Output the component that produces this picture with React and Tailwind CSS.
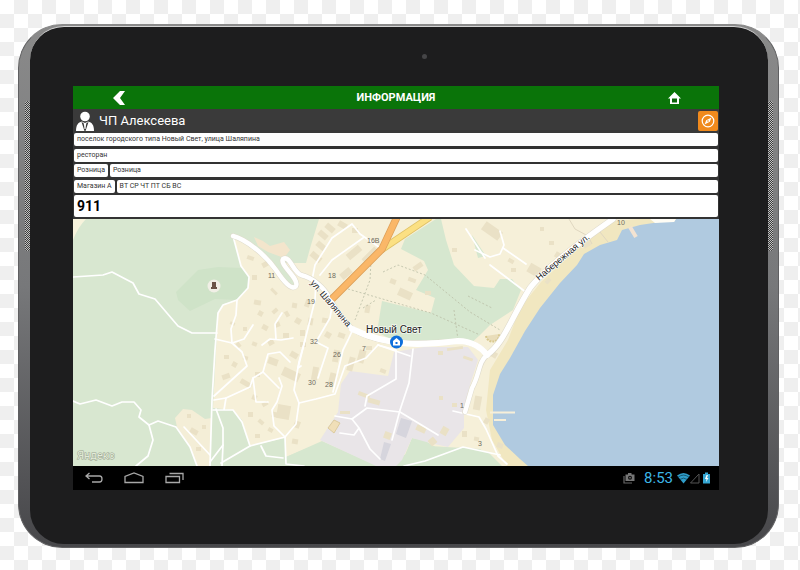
import React from 'react';

const buildings = [
  [247, 256, 7, 4, 20], [262, 262, 6, 5, -30], [252, 275, 5, 5, 0], [270, 290, 8, 3, 45], [254, 300, 7, 5, 10],
  [258, 311, 5, 5, 30], [272, 309, 6, 4, -40], [230, 322, 5, 3, 20], [243, 327, 4, 4, 0], [262, 325, 6, 5, 30],
  [275, 322, 5, 5, -20], [284, 312, 6, 4, 60], [292, 303, 5, 5, 10], [295, 318, 6, 6, 30], [283, 333, 6, 5, 0],
  [268, 340, 6, 5, -30], [252, 342, 5, 4, 20], [236, 343, 5, 4, 50], [224, 355, 5, 4, 0], [232, 362, 5, 5, 30],
  [222, 374, 8, 5, -20], [243, 356, 5, 4, 15], [240, 381, 12, 5, 30], [255, 372, 5, 5, 0], [268, 358, 10, 7, 20],
  [282, 370, 18, 9, 25], [290, 352, 8, 6, 30], [300, 342, 6, 5, 0], [252, 395, 5, 5, 20], [262, 402, 6, 4, -30],
  [248, 412, 5, 5, 0], [258, 420, 6, 4, 40], [272, 412, 5, 5, 10], [255, 434, 5, 4, 0], [268, 428, 5, 4, 30],
  [277, 405, 13, 14, 10], [294, 421, 6, 7, 20], [292, 439, 6, 5, 10], [318, 232, 10, 6, 40], [316, 243, 10, 6, 40],
  [325, 225, 10, 6, 40], [338, 222, 9, 6, 30], [310, 254, 12, 6, 40], [346, 249, 16, 7, -40], [340, 270, 12, 7, -40],
  [361, 252, 18, 6, -45], [352, 228, 6, 5, 0], [365, 305, 5, 8, 10], [390, 279, 6, 5, 20], [398, 290, 14, 8, 25],
  [413, 264, 10, 5, -35], [408, 278, 8, 4, 20], [425, 291, 6, 4, 0], [482, 226, 20, 10, 35], [452, 248, 5, 4, 0],
  [508, 259, 6, 4, 30], [511, 268, 5, 4, 0], [528, 265, 12, 10, 30], [549, 241, 5, 4, 0], [555, 252, 5, 6, 30],
  [540, 227, 4, 4, 0], [583, 243, 8, 4, -30], [545, 279, 6, 4, -50], [333, 350, 6, 12, 10], [348, 357, 6, 14, 15],
  [312, 367, 6, 13, 10], [329, 373, 7, 12, 15], [358, 350, 7, 13, 15], [366, 346, 6, 4, 0], [380, 369, 6, 4, 20],
  [358, 393, 12, 4, 20], [368, 399, 12, 5, 15], [340, 411, 10, 3, 0], [384, 432, 7, 7, 20], [416, 426, 10, 6, 25],
  [429, 438, 7, 7, -40], [441, 427, 7, 8, 30], [474, 396, 7, 14, 10], [484, 418, 5, 6, 30], [497, 443, 6, 5, 20],
  [474, 437, 5, 4, 10], [462, 431, 5, 6, 0], [438, 351, 5, 4, 0], [447, 347, 16, 3, -8], [463, 357, 10, 3, 20],
  [439, 396, 4, 4, 0], [452, 403, 5, 4, 0], [492, 352, 5, 6, 30], [190, 429, 8, 5, 30], [202, 425, 4, 4, 0],
  [196, 447, 5, 4, 0], [187, 414, 4, 4, 0], [305, 300, 5, 7, 20], [308, 318, 5, 7, 10], [322, 318, 6, 5, 10],
  [325, 332, 6, 6, 30], [300, 330, 5, 6, 0], [338, 333, 7, 5, 20],
];

const minorRoads = [
  'M73 277 L103 275 L112 272 L133 283 L139 294 L155 299 L178 326 L192 333 L217 333',
  'M233 236 L241 266 L249 277 L248 288 L237 300 L223 305 L218 313 L215 350 L212 400 L210 466',
  'M237 300 L236 315 L231 329 L232 343 L215 339',
  'M232 343 L244 339 L253 325',
  'M232 343 L242 352 L247 366 L214 396',
  'M73 401 L80 404 L96 400 L112 406 L122 402 L134 402 L141 410 L139 417 L149 425 L153 440 L148 456 L136 466',
  'M149 425 L158 421 L176 427 L190 447 L197 466',
  'M184 427 L210 455',
  'M216 409 L223 428 L223 445 L210 462',
  'M223 445 L222 466 M221 463 L250 446 L285 437',
  'M214 400 L226 398 L224 410 M213 410 L233 410 L242 422 L250 446',
  'M226 398 L250 387 L253 378 L263 372 L268 354 L280 352 L290 362',
  'M263 372 L279 388 M253 378 L256 402 L268 402 M279 378 L282 386 L277 402 L272 410 L274 426 L285 437 L286 464 L304 466',
  'M261 446 L266 456 L283 458',
  'M262 345 L270 339 L281 340 L293 338 M276 339 L275 324 L282 313',
  'M316 281 L315 300 L305 340 L298 368 L301 366',
  'M333 300 L330 318 L316 342 L328 348 L318 378',
  'M299 403 L294 390 L299 362 L305 340',
  'M299 403 L316 399 L335 394 L345 366 L366 358 L378 345',
  'M299 403 L296 424 L285 437',
  'M320 275 L332 260 L363 238 M312 280 L315 265 L332 238 L352 224 L360 234 L379 247',
  'M354 327 L348 340 L343 350 L333 392',
  'M378 345 L396 350 L396 379 L367 396 L365 406',
  'M413 349 L409 383 L400 410 L392 440',
  'M335 416 L352 419 L367 408 L400 412 L438 435',
  'M352 419 L359 428 L354 435 L340 433 M359 428 L370 449 L380 459',
  'M378 345 L410 356',
  'M404 466 L425 461 L463 447 L500 455',
  'M453 411 L479 417 L486 429 L498 456 L507 464',
  'M475 250 L490 257 L500 254 L504 245 L500 231',
  'M466 229 L485 258 M490 265 L527 293 M503 248 L526 264',
];

const labels = [
  ['11', 268, 278], ['18', 328, 278], ['16В', 367, 243], ['19', 307, 304], ['32', 310, 344], ['26', 333, 357],
  ['7', 362, 351], ['30', 308, 385], ['28', 325, 387], ['1', 460, 408], ['3', 478, 446], ['10', 617, 225],
];

const mainRoad =
  'M233 236 C245 239 265 254 276 270 C284 282 292 291 296 286 C300 279 279 265 283 259 C290 255 293 272 301 275 C313 278 324 287 330 299 C343 322 350 331 370 337 C392 345 425 344 458 341 C472 341 482 348 487 355';
const coastRoad = 'M487 355 C504 343 510 320 530 288 C544 270 570 249 613 219';
const southRoad = 'M487 355 C478 362 480 374 472 388 L465 412';

function TownMap() {
  return (
    <svg
      className="block w-full aspect-[646/247]"
      viewBox="73 219 646 247"
      preserveAspectRatio="xMidYMid slice"
      role="img"
      aria-label="Новый Свет"
    >
      <rect x="73" y="219" width="646" height="247" fill="#d8e7d0" />
      <path d="M73 219 H86 Q78 227 73 240Z" fill="#f7f3dc" />
      <path d="M178 300 L176 292 L198 270 L218 267 L243 268 L250 279 L247 290 L237 300 L215 299 L190 311Z" fill="#cfe3c8" />
      {/* built-up land */}
      <path
        d="M233 236 L246 242 L272 265 L292 289 L299 283 L284 263 L306 263 L311 245 L319 219 H719 V466 H500 L480 449 L430 446 L372 466 L322 442 L286 457 L285 438 L250 446 L242 420 L233 410 L213 408 L218 312 L224 304 L237 300 L248 288 L249 277 L241 266Z"
        fill="#f6f0d9"
      />
      <path d="M183 409 L192 410 L205 419 L212 418 L210 466 H197 L190 447 L177 427 L175 418Z" fill="#f4eed7" />
      <path d="M254 237 L263 241 L270 246 L284 242 L290 250 L284 258 L268 252 L258 246Z" fill="#f3e5cc" />
      {/* parks */}
      <path
        d="M405 239 L436 219 H441 L446 240 L454 265 L474 286 L494 288 L500 279 L512 279 L521 290 L513 310 L490 325 L480 335 L469 345 L455 340 L396 342 L377 332 L382 301 L431 313 L435 298 L416 290 L428 270 L424 261 L401 249Z"
        fill="#d6e7cf"
      />
      <path d="M472 235 L486 256 L478 258Z" fill="#d6e7cf" />
      <path d="M412 438 L424 440 L440 450 L464 447 L488 452 L502 466 H398 L405 455Z" fill="#d6e7cf" />
      <path d="M322 441 L286 457 L288 466 H378Z" fill="#d6e7cf" />
      {/* industrial area */}
      <path
        d="M350 371 L388 376 L394 352 L424 347 L468 347 L478 360 L470 385 L464 408 L464 428 L448 447 L430 443 L412 438 L402 460 L396 466 H376 L320 440 L338 412 L341 384Z"
        fill="#e9e5e8"
      />
      {/* beach and sea */}
      <path
        d="M614 221 L640 219 H680 L600 260 L530 350 L497 400 L500 430 L530 466 H507 L492 440 L486 410 L490 370 L508 340 L520 308 L541 282 L580 246Z"
        fill="#f1e7c0"
      />
      <path
        d="M676 219 L674 222 L660 222 L640 225 L622 230 L617 240 L600 245 L584 254 L577 265 L560 283 L540 308 L525 331 L510 358 L500 374 L493 395 L493 425 L505 445 L520 459 L528 466 H719 V219Z"
        fill="#b0cae0"
      />
      <path d="M676 219 L674 222 L655 223 L650 219Z" fill="#fffdf5" />
      <path d="M630 227 L636 237" stroke="#f3e3d2" strokeWidth="4" />
      <path d="M490 412.500 H515 M494 420 H506" stroke="#f7efd9" strokeWidth="2" />
      {/* houses */}
      <g fill="#eae1c6">
        {buildings.map(([x, y, w, h, r]) => (
          <rect key={`${x}-${y}`} x={x} y={y} width={w} height={h} transform={`rotate(${r} ${x + w / 2} ${y + h / 2})`} />
        ))}
      </g>
      <path d="M401 418 L412 421 L406 438 L396 434Z M384 442 L391 444 L385 461 L380 459Z" fill="#d6d5dd" />
      <path d="M334 420 L340 423 L334 433 L328 428Z" fill="#f0dfb8" stroke="#dccb9e" />
      <path d="M486 336 A6 6 0 1 0 499 334" fill="#e9ddb9" stroke="#d8c88e" strokeWidth="2" strokeDasharray="2 1" />
      {/* footpaths */}
      <path
        d="M348 289 L431 313 L480 335 M371 261 L370 280 L355 320 M383 272 L398 265 L425 275 L470 312 L500 330 M363 308 L376 300 M468 296 L492 308 M454 310 L458 340"
        fill="none"
        stroke="#b9bca4"
        strokeWidth="0.800"
        strokeDasharray="2 2"
      />
      <g fill="none" stroke="#fff" strokeWidth="1.700" strokeLinejoin="round" strokeLinecap="round">
        {minorRoads.map((d) => (
          <path key={d} d={d} />
        ))}
      </g>
      <path d="M569 219 L575 229 L588 236 L592 244 M600 232 L608 242" fill="none" stroke="#e0d7c0" />
      {/* main roads */}
      <g fill="none" strokeLinecap="round" strokeLinejoin="round">
        <g stroke="#dedacb">
          <path d={mainRoad} strokeWidth="5.500" />
          <path d={coastRoad} strokeWidth="6.500" />
          <path d={southRoad} strokeWidth="5.500" />
        </g>
        <g stroke="#fff">
          <path d={mainRoad} strokeWidth="4.500" />
          <path d="M352 329 C392 348 425 345 458 341 C472 341 482 348 487 355" strokeWidth="6" />
          <path d={coastRoad} strokeWidth="5.500" />
          <path d={southRoad} strokeWidth="4.500" />
        </g>
      </g>
      <g fill="none" strokeLinejoin="round">
        <path d="M430 217 L381 250" stroke="#dfc164" strokeWidth="7" />
        <path d="M430 217 L381 250" stroke="#fbe083" strokeWidth="5.500" />
        <path d="M397 217 L382 249 L332 299" stroke="#dd9f58" strokeWidth="7.500" />
        <path d="M397 217 L382 249 L332 299" stroke="#fab768" strokeWidth="6" />
      </g>
      {/* monument */}
      <circle cx="214" cy="286" r="6.500" fill="#f1efe6" />
      <path d="M212 282 H216 V287 H217 V289 H211 V287 H212Z" fill="#6b5347" />
      {/* labels */}
      <g className="font-['Liberation_Sans',sans-serif] text-[7px]" fill="#6f6b5e">
        {labels.map(([t, x, y]) => (
          <text key={t} x={x} y={y}>
            {t}
          </text>
        ))}
      </g>
      <g
        className="font-['Liberation_Sans',sans-serif] text-[9px]"
        fill="#222"
        stroke="#fff"
        strokeOpacity="0.700"
        strokeWidth="1.500"
        paintOrder="stroke"
      >
        <text transform="translate(310 283) rotate(50)">ул. Шаляпина</text>
        <text transform="translate(539 281) rotate(-40)">Набережная ул.</text>
        <text x="366" y="333" className="text-[10px]">
          Новый Свет
        </text>
      </g>
      <circle cx="396.500" cy="342" r="6.500" fill="#0f6fdc" />
      <path d="M396.500 338 L400 341 V345.500 H393 V341Z" fill="#fff" />
      <rect x="395.500" y="342" width="2" height="2" fill="#0f6fdc" />
      <text
        x="77"
        y="459"
        className="font-[Roboto,sans-serif] text-[11px]"
        fill="#e3ebda"
        stroke="#98a48e"
        strokeWidth="1"
        paintOrder="stroke"
      >
        Яндекс
      </text>
    </svg>
  );
}

function Field({ className = '', children }) {
  return <div className={`flex items-center rounded-xs bg-white px-[3px] ${className}`}>{children}</div>;
}

function Grille() {
  return (
    <div className="mt-[76px] h-[150px] w-[5px] rounded-full bg-[conic-gradient(#c4c4c4_25%,#3a3a3a_0_50%,#c4c4c4_0_75%,#3a3a3a_0)] bg-[length:2px_2px]" />
  );
}

export default function App() {
  return (
    <main className="min-h-screen bg-white bg-[conic-gradient(#efefef_25%,#fff_0_50%,#efefef_0_75%,#fff_0)] bg-[length:28px_28px] pt-[24px] pr-[21px] pb-[22px] pl-[18px] font-[Roboto,sans-serif]">
      <div className="flex rounded-[44px] border border-[#606062] bg-linear-to-b from-[#8a8a8a] via-[#77787a] to-[#47474a] border-t-[#8a8a8a]">
        <div className="flex w-[11px] shrink-0 justify-end">
          <Grille />
        </div>
        <div className="mt-px mb-[3px] min-w-0 grow border-t border-[#d5d5d5] rounded-[34px] bg-[#1d1d1e] pr-[49px] pb-[54px] pl-[43px]">
          <div className="flex h-[59px] items-center justify-center pl-[56px]">
            <span className="size-[5px] rounded-full bg-[#454547]" />
          </div>
          <div className="bg-[#333]">
            <header className="grid h-[23px] grid-cols-[1fr_auto_1fr] items-center bg-[#0a7409] text-white">
              <button type="button" aria-label="Назад" className="ml-[39px] justify-self-start">
                <svg className="block" width="14" height="16" viewBox="0 0 14 16">
                  <path d="M13 1 H8 L1 8 L8 15 H13 L8 8Z" fill="#fff" />
                </svg>
              </button>
              <h1 className="text-[11px] leading-[16px] font-bold">ИНФОРМАЦИЯ</h1>
              <button type="button" aria-label="Домой" className="mr-[37px] justify-self-end">
                <svg className="block" width="15" height="14" viewBox="0 0 15 14">
                  <path d="M7.500 1 L14 7.500 H12 V13 H3 V7.500 H1Z" fill="#fff" />
                  <path d="M5 7.500 H10 V11.500 H5Z" fill="#0a6409" />
                </svg>
              </button>
            </header>
            <div className="flex h-[24px] items-center bg-[#3a3a3a] pr-px pl-[3px] text-white">
              <svg className="shrink-0" width="18" height="20" viewBox="0 0 18 20">
                <circle cx="9" cy="5.500" r="4.800" fill="#fff" />
                <path d="M0 20 C0 14 2 11.500 6 10.500 L9 12 L12 10.500 C16 11.500 18 14 18 20Z" fill="#fff" />
                <path d="M5.500 11 L8.500 20 H9.500 L12.500 11 L10.500 12 L10 14 L9.500 18 H8.500 L8 14 L7.500 12Z" fill="#3a3a3a" />
              </svg>
              <h2 className="ml-[5px] grow text-[13px] leading-[20px]">ЧП Алексеева</h2>
              <button
                type="button"
                aria-label="Маршрут"
                className="flex size-[20px] items-center justify-center rounded-xs bg-[#f08a1d]"
              >
                <svg width="14" height="14" viewBox="0 0 14 14">
                  <circle cx="7" cy="7" r="5.800" fill="none" stroke="#fff" strokeWidth="1.200" />
                  <path d="M10.500 3.500 L8.800 7.800 L3.500 10.500 L5.200 6.200Z" fill="#fff" />
                  <circle cx="7" cy="7" r="0.800" fill="#f08a1d" />
                </svg>
              </button>
            </div>
            <div className="flex h-[86px] flex-col justify-between px-px pb-[2px] text-[7px] leading-[13px] text-[#333]">
              <Field>поселок городского типа Новый Свет, улица Шаляпина</Field>
              <Field>ресторан</Field>
              <div className="flex gap-[2px]">
                <Field>Розница</Field>
                <Field className="grow">Розница</Field>
              </div>
              <div className="flex gap-[2px]">
                <Field>Магазин А</Field>
                <Field className="grow">ВТ СР ЧТ ПТ СБ ВС</Field>
              </div>
              <Field className="text-[14px] leading-[22px] font-bold text-black">911</Field>
            </div>
            <TownMap />
            <nav className="flex h-[24px] items-center bg-black pr-[8px] pl-[12px]">
              <button type="button" aria-label="Назад">
                <svg className="block" width="18" height="12" viewBox="0 0 18 12" fill="none" stroke="#a8a8a8" strokeWidth="1.300">
                  <path d="M4.500 1 L1 4 L4.500 7 M1 4 H14.500 Q17 4 17 7 Q17 10 14.500 10 H7" />
                </svg>
              </button>
              <button type="button" aria-label="Главный экран" className="ml-[21px]">
                <svg className="block" width="20" height="12" viewBox="0 0 20 12" fill="none" stroke="#a8a8a8" strokeWidth="1.300">
                  <path d="M1 10.500 V4.500 L10 1 L19 4.500 V10.500Z" />
                </svg>
              </button>
              <button type="button" aria-label="Недавние" className="ml-[21px]">
                <svg className="block" width="19" height="12" viewBox="0 0 19 12" fill="none" stroke="#a8a8a8" strokeWidth="1.300">
                  <path d="M1 4.500 H14.500 V10.500 H1Z M4.500 1.500 H18 V8" />
                </svg>
              </button>
              <svg className="ml-auto" width="12" height="12" viewBox="0 0 12 12">
                <path d="M1 4 V11 H9" fill="none" stroke="#666" strokeWidth="1.200" />
                <path d="M2.500 2.500 H5 V1 H8.500 V2.500 H11.500 V9 H2.500Z" fill="#777" />
                <circle cx="7" cy="5.800" r="2" fill="#111" />
                <circle cx="7" cy="5.800" r="0.800" fill="#888" />
              </svg>
              <time className="ml-[9px] text-[15px] leading-[20px] text-[#3db6e6]">8:53</time>
              <svg className="ml-[3px]" width="35" height="14" viewBox="0 0 35 14">
                <path d="M1 4.500 Q7.500 -0.500 14 4.500 L7.500 12.500Z" fill="#2f9dc9" />
                <path d="M2 6.200 Q7.500 2 13 6.200 M4 8.400 Q7.500 5.800 11 8.400" fill="none" stroke="#0b3c50" strokeWidth="0.700" />
                <path d="M23 3 V12 H14.500Z" fill="none" stroke="#555" />
                <path d="M27 3 H29 V1.500 H32 V3 H34 V12.500 H27Z" fill="#35a6d2" />
                <path d="M30.500 4 L29 8 H30.500 L30 11 L32.500 7 H31 L32 4Z" fill="#fff" />
              </svg>
            </nav>
          </div>
        </div>
        <div className="flex w-[10px] shrink-0 justify-start">
          <Grille />
        </div>
      </div>
    </main>
  );
}
